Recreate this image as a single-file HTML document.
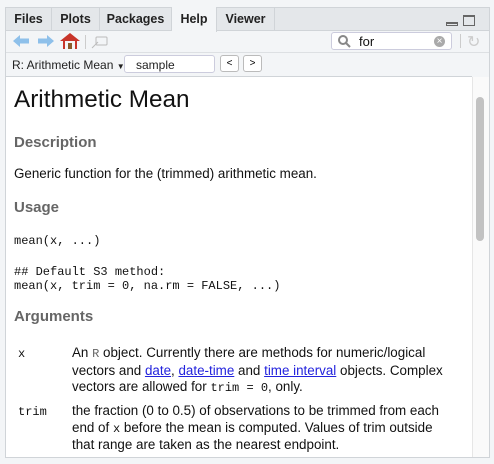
<!DOCTYPE html>
<html><head><style>
*{margin:0;padding:0;box-sizing:border-box}
body{width:494px;height:464px;background:#f3f5f7;font-family:"Liberation Sans",sans-serif;position:relative;overflow:hidden}
.a{position:absolute;white-space:nowrap}
.panel{position:absolute;left:5px;top:7px;width:485px;height:451px;border:1px solid #d0d4d8;background:#f3f5f7}
.tab{position:absolute;top:7px;height:24px;font-weight:bold;font-size:12.5px;color:#222;line-height:24px;text-align:center;border-right:1px solid #d0d4d8}
.sans{font-size:13.4px;color:#111}
.h{font-size:15px;font-weight:bold;color:#666}
.m{font-family:"Liberation Mono",monospace;font-size:12px;color:#111}
a{color:#2222dd;text-decoration:underline}
</style></head><body>
<div class="panel"></div>
<div class="a" style="left:6px;top:8px;width:483px;height:23px;background:#e4e7ea;border-bottom:1px solid #d0d4d8"></div>
<div class="tab" style="left:6px;width:46px">Files</div>
<div class="tab" style="left:52px;width:48px">Plots</div>
<div class="tab" style="left:100px;width:72px">Packages</div>
<div class="tab" style="left:172px;width:45px;background:#f3f5f7;height:25px">Help</div>
<div class="tab" style="left:217px;width:58px">Viewer</div>
<div class="a" style="left:446px;top:22px;width:12px;height:4px;border:1px solid #666;border-top-width:2px"></div>
<div class="a" style="left:463px;top:15px;width:12px;height:11px;border:1px solid #666;border-top-width:2px"></div>
<div class="a" style="left:6px;top:52px;width:483px;height:1px;background:#dde0e3"></div>
<svg class="a" style="left:0;top:30px" width="120" height="22">
<path d="M13 11 L20 5 V8.5 H29 V13.5 H20 V17 Z" fill="#8ec0ea"/>
<path d="M38 8.5 H47 V5 L54 11 L47 17 V13.5 H38 Z" fill="#8ec0ea"/>
<path d="M60 11 L70 3 L80 11 H77 V19 H63 V11 Z" fill="#c8352a"/>
<rect x="65" y="11" width="10" height="8" fill="#f4f4f4"/><rect x="68" y="13" width="4" height="6" fill="#8a5a2a"/>
<rect x="85" y="5" width="1" height="14" fill="#ccc"/>
<rect x="96" y="7" width="11" height="8" rx="1" fill="none" stroke="#bbb"/><path d="M92 18 L98 12" stroke="#bbb"/>
</svg>
<div class="a" style="left:331px;top:32px;width:121px;height:18px;background:#fff;border:1px solid #ccd;border-radius:3px"></div>
<svg class="a" style="left:337px;top:34px" width="14" height="14"><circle cx="6" cy="6" r="4" fill="none" stroke="#888" stroke-width="2"/><path d="M9 9 L13 13" stroke="#888" stroke-width="2"/></svg>
<div class="a" style="left:359px;top:34px;font-size:13px;color:#111">for</div>
<div class="a" style="left:434px;top:36px;width:11px;height:11px;border-radius:50%;background:#aaa;color:#fff;font-size:10px;line-height:11px;text-align:center">×</div>
<div class="a" style="left:460px;top:34px;width:1px;height:14px;background:#ccc"></div>
<div class="a" style="left:467px;top:32px;font-size:16px;color:#ccc">↻</div>
<div class="a" style="left:12px;top:58px;font-size:12px;color:#222">R: Arithmetic Mean <span style="font-size:8px">▼</span></div>
<div class="a" style="left:124px;top:55px;width:91px;height:18px;background:#fff;border:1px solid #ccd;border-radius:3px;font-size:12px;padding:2px 0 0 11px;color:#222">sample</div>
<div class="a" style="left:220px;top:55px;width:19px;height:17px;background:#fff;border:1px solid #bbb;border-radius:3px;font-size:10px;text-align:center;line-height:15px">&lt;</div>
<div class="a" style="left:243px;top:55px;width:19px;height:17px;background:#fff;border:1px solid #bbb;border-radius:3px;font-size:10px;text-align:center;line-height:15px">&gt;</div>
<div class="a" style="left:6px;top:76px;width:466px;height:381px;background:#fff;border-top:1px solid #d0d4d8"></div>
<div class="a" style="left:472px;top:77px;width:17px;height:380px;background:#fafafa;border-left:1px solid #e6e6e6"></div>
<div class="a" style="left:476px;top:97px;width:8px;height:144px;background:#c2c2c2;border-radius:4px"></div>
<div class="a" style="left:14px;top:86px;font-size:24.3px;color:#111">Arithmetic Mean</div>
<div class="a h" style="left:14px;top:134px">Description</div>
<div class="a sans" style="left:14px;top:166px">Generic function for the (trimmed) arithmetic mean.</div>
<div class="a h" style="left:14px;top:199px">Usage</div>
<div class="a m" style="left:14px;top:234px">mean(x, ...)</div>
<div class="a m" style="left:14px;top:265px">## Default S3 method:</div>
<div class="a m" style="left:14px;top:279px">mean(x, trim = 0, na.rm = FALSE, ...)</div>
<div class="a h" style="left:14px;top:308px">Arguments</div>
<div class="a m" style="left:18px;top:347px">x</div>
<div class="a sans" style="left:72px;top:345px;line-height:16.5px">An <span class="m" style="color:#666">R</span> object. Currently there are methods for numeric/logical<br>vectors and <a>date</a>, <a>date-time</a> and <a>time interval</a> objects. Complex<br>vectors are allowed for <span class="m">trim = 0</span>, only.</div>
<div class="a m" style="left:18px;top:405px">trim</div>
<div class="a sans" style="left:72px;top:403px;line-height:16.5px">the fraction (0 to 0.5) of observations to be trimmed from each<br>end of <span class="m">x</span> before the mean is computed. Values of trim outside<br>that range are taken as the nearest endpoint.</div>
</body></html>
